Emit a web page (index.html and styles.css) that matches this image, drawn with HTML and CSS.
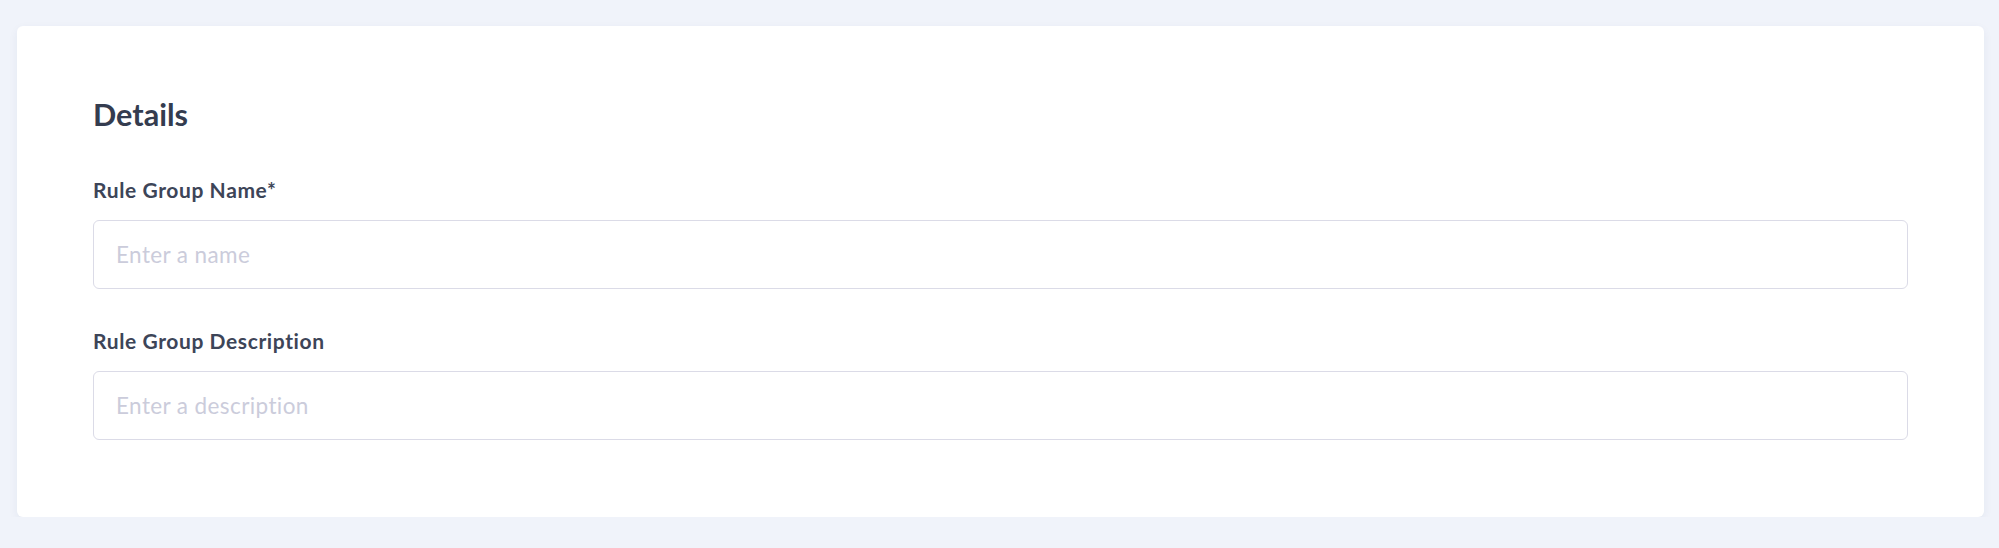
FILE: index.html
```html
<!DOCTYPE html>
<html lang="en">
<head>
<meta charset="utf-8">
<title>Details</title>
<link rel="stylesheet" href="styles.css">
</head>
<body>
<main class="page">
  <section class="card">
    <h2 class="card-title">Details</h2>
    <div class="field">
      <label class="field-label" for="name">Rule Group Name*</label>
      <input class="field-input" id="name" type="text" placeholder="Enter a name">
    </div>
    <div class="field">
      <label class="field-label" for="desc">Rule Group Description</label>
      <input class="field-input" id="desc" type="text" placeholder="Enter a description">
    </div>
  </section>
</main>
</body>
</html>
```

FILE: styles.css
```css
html, body {
  margin: 0;
  padding: 0;
  background: #f0f3fa;
  font-family: "Lato", "Noto Sans", sans-serif;
}

.page {
  padding: 26px 15px 0 17px;
}

.card {
  background: #ffffff;
  border-radius: 6px;
  box-shadow: 0 3px 10px rgba(40, 50, 110, 0.06);
  padding: 71px 76px 77px;
  display: flex;
  flex-direction: column;
}

.card-title {
  margin: 0;
  font-size: 30.6px;
  line-height: 36px;
  font-weight: 700;
  color: #343c4f;
}

.field {
  display: flex;
  flex-direction: column;
  gap: 18px;
  margin-top: 45px;
}

.field + .field {
  margin-top: 40px;
}

.field-label {
  font-size: 21px;
  line-height: 24px;
  letter-spacing: 0.6px;
  font-weight: 700;
  color: #3d4558;
}

.field-input {
  box-sizing: border-box;
  height: 69px;
  margin: 0;
  padding: 0 22px;
  border: 1.5px solid #dbdbe7;
  border-radius: 6px;
  background: #ffffff;
  font-family: "Lato", "Noto Sans", sans-serif;
  font-size: 22.5px;
  letter-spacing: 0.4px;
  color: #343c4f;
  outline: none;
}

.field-input::placeholder {
  color: #cbccdb;
  opacity: 1;
}
```
